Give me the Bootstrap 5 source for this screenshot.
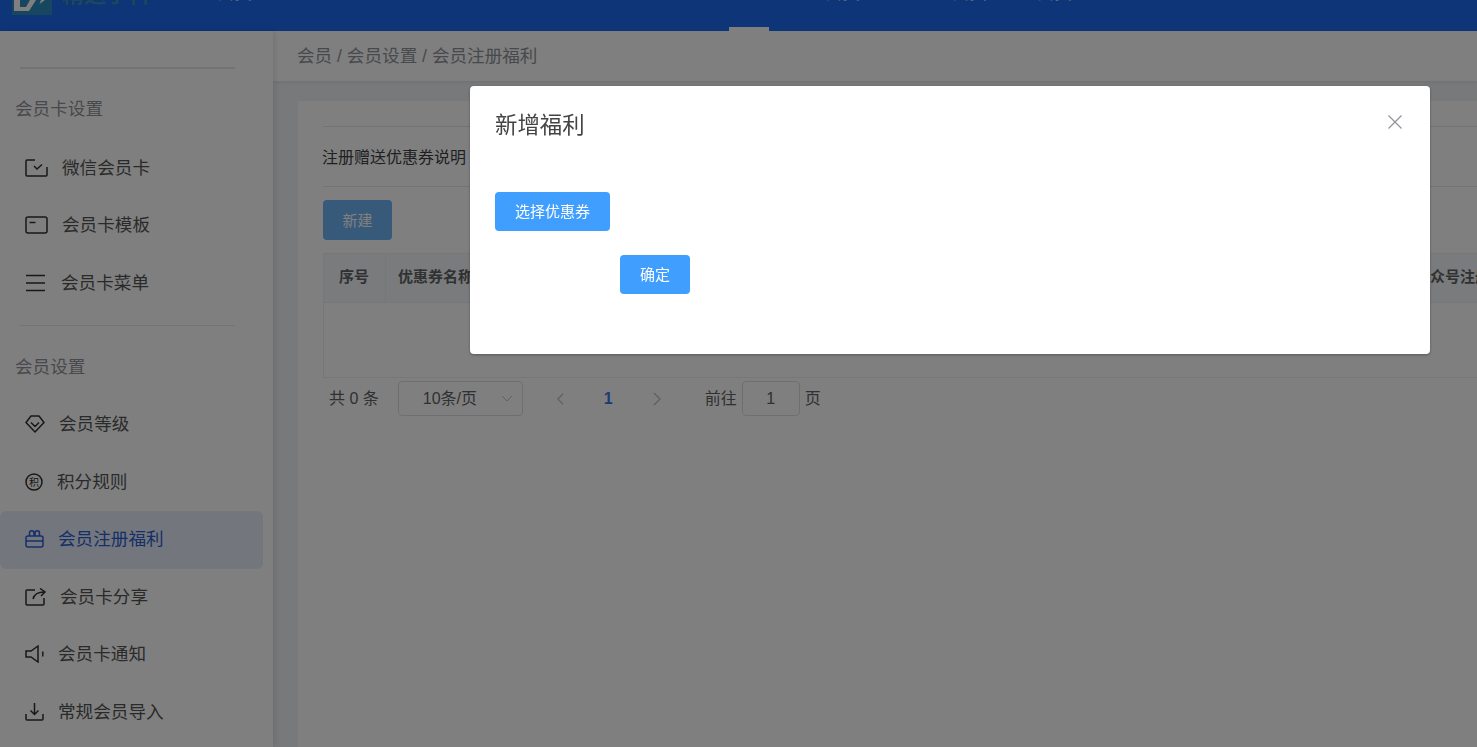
<!DOCTYPE html>
<html lang="zh-CN">
<head>
  <meta charset="UTF-8">
  <title>会员注册福利</title>
  <link href="https://cdn.jsdelivr.net/npm/bootstrap@5.3.0/dist/css/bootstrap.min.css" rel="stylesheet">
  <style>
    html, body {
      height: 100%;
    }
    body {
      overflow: hidden;
      background-color: #f0f2f5;
      color: #303133;
      font-family: "Liberation Sans", "Noto Sans CJK SC", sans-serif;
    }
    /* top bar, page is scrolled so it is cut off */
    .top-strip {
      height: 31px;
      background-color: #1a6af0;
      overflow: hidden;
      width: 1477px;
    }
    .strip-logo {
      width: 40px;
      height: 15px;
      margin-left: 12px;
      flex: none;
    }
    .strip-name {
      margin: -18px 0 0 10px;
      width: 90px;
      font-size: 22px;
      line-height: 26px;
      font-weight: 700;
      color: #3f8fb5;
      white-space: nowrap;
    }
    .strip-link {
      position: absolute;
      top: -16.5px;
      font-size: 18px;
      line-height: 18px;
      color: #fff;
    }
    .strip-active {
      position: absolute;
      left: 729px;
      top: 27px;
      width: 40px;
      height: 4px;
      background-color: #fff;
    }
    .page-area {
      height: calc(100% - 31px);
    }
    /* sidebar */
    .side-menu {
      width: 273px;
      flex: none;
      background-color: #fff;
      box-shadow: 2px 0 6px rgba(0, 0, 0, .1);
      padding-top: 36px;
      position: relative;
      z-index: 1;
    }
    .side-line {
      width: 215px;
      height: 2px;
      margin-left: 20px;
      background-color: #e4e7ed;
    }
    .side-line-b {
      height: 1px;
      margin-top: 12.5px;
    }
    .side-title {
      height: 70.5px;
      padding: 9px 0 0 15px;
      font-size: 17.6px;
      color: #909399;
    }
    .side-title-b {
      padding-top: 13px;
    }
    .side-item {
      height: 57.5px;
      width: 263px;
      padding: 0 0 1px 25px;
      gap: 14px;
      font-size: 17.6px;
      color: #555;
      border-radius: 6px;
    }
    .side-item svg {
      flex: none;
      fill: none;
      stroke: #303133;
      stroke-width: 1.5;
    }
    .side-item svg text {
      fill: #303133;
      stroke: none;
      font-size: 10px;
      text-anchor: middle;
    }
    .side-item.current {
      background-color: #e7edfb;
      color: #2a5fd0;
    }
    .side-item.current svg {
      stroke: #2a5fd0;
    }
    /* main */
    .main-area {
      min-width: 0;
    }
    .crumb-bar {
      height: 50px;
      padding-left: 24px;
      background-color: #fff;
      font-size: 17.6px;
      color: #909399;
      box-shadow: 0 1px 4px rgba(0, 0, 0, .08);
    }
    .main-panel {
      margin: 20px 0 0 25px;
      padding: 25px 0 0 25px;
      background-color: #fff;
      flex: 1;
      width: 1300px;
    }
    .tip-row {
      height: 61px;
      padding-top: 2px;
      border-top: 1px solid #e4e7ed;
      border-bottom: 1px solid #e4e7ed;
      font-size: 16px;
      color: #3f4145;
    }
    .tip-row span {
      margin-left: -1px;
    }
    .add-btn {
      margin-top: 13px;
      width: 69px;
      height: 40px;
      padding: 2px 0 0;
      font-size: 15px;
      color: #fff;
      background-color: #6fb3f5;
      border: 0;
      border-radius: 4px;
    }
    .coupon-table {
      margin-top: 13px;
      width: 1300px;
      height: 125px;
      border: 1px solid #ebeef5;
    }
    .coupon-head {
      height: 49px;
      background-color: #f5f7fa;
      border-bottom: 1px solid #ebeef5;
      font-size: 15px;
      font-weight: 700;
      color: #606266;
    }
    .coupon-head > div {
      padding-left: 12px;
      padding-bottom: 2px;
      white-space: nowrap;
    }
    .head-no {
      width: 62px;
      padding-left: 15px !important;
      border-right: 1px solid #ebeef5;
    }
    .head-name {
      width: 1017px;
    }
    .pager-row {
      height: 35px;
      margin-top: 3px;
      padding-left: 6px;
      font-size: 16px;
      color: #606266;
    }
    .pager-size {
      width: 125px;
      height: 35px;
      margin-left: 19px;
      padding-left: 24px;
      padding-right: 9px;
      border: 1px solid #dcdfe6;
      border-radius: 4px;
    }
    .pager-num {
      margin: 0 39px 0 28px;
      width: 9px;
      font-size: 16px;
      font-weight: 700;
      color: #3a7be0;
    }
    .pager-jump {
      width: 58px;
      height: 35px;
      margin: 0 5px 0 5px;
      border: 1px solid #dcdfe6;
      border-radius: 4px;
    }
    /* dialog */
    .benefit-dialog {
      max-width: 960px;
      width: 960px;
      margin: 86px 0 0 470px;
    }
    .benefit-dialog .modal-content {
      height: 268px;
      border: 0;
      border-radius: 4px;
      box-shadow: 0 1px 3px rgba(0, 0, 0, .3);
    }
    .benefit-title {
      padding: 24px 25px 0;
      font-size: 22.4px;
      line-height: 32px;
      font-weight: 400;
      color: #444;
    }
    .benefit-close {
      position: absolute;
      top: 29px;
      right: 28px;
      width: 14px;
      height: 14px;
      padding: 0;
      border: 0;
      background: none;
    }
    .benefit-body {
      padding: 50px 25px 0;
    }
    .blue-btn {
      display: block;
      height: 39px;
      padding: 2px 20px 0;
      font-size: 15px;
      color: #fff;
      background-color: #409eff;
      border: 0;
      border-radius: 4px;
    }
    .blue-btn.save-btn {
      margin: 24px 0 0 125px;
      width: 70px;
      padding: 2px 0 0;
    }
  </style>
</head>
<body>
  <div class="top-strip position-relative d-flex align-items-start">
    <svg class="strip-logo" viewBox="0 0 40 15">
      <rect width="40" height="15" fill="#2f8fc0"/>
      <path d="M2 0v11h15L24 0h-6l-4 7H8V0zM29 0l-1.500 4L33 0z" fill="#fff"/>
    </svg>
    <div class="strip-name">精选学科</div>
    <span class="strip-link" style="left:216px">会员</span>
    <span class="strip-link" style="left:824px">会员</span>
    <span class="strip-link" style="left:951px">会员</span>
    <span class="strip-link" style="left:1036px">会员</span>
    <div class="strip-active"></div>
  </div>

  <div class="page-area d-flex">
    <div class="side-menu">
      <div class="side-line"></div>
      <div class="side-title d-flex align-items-center">会员卡设置</div>
      <div class="side-item d-flex align-items-center">
        <svg width="23" height="18" viewBox="0 0 23 18"><path d="M10 1H2a1 1 0 0 0-1 1v14a1 1 0 0 0 1 1h19a1 1 0 0 0 1-1V8M9 7l3 3 5-4.500"/></svg>
        <span>微信会员卡</span>
      </div>
      <div class="side-item d-flex align-items-center">
        <svg width="23" height="18" viewBox="0 0 23 18"><rect x="1" y="1" width="21" height="16" rx="2"/><path d="M4.500 6.500h6"/></svg>
        <span>会员卡模板</span>
      </div>
      <div class="side-item d-flex align-items-center">
        <svg width="22" height="18" viewBox="0 0 22 18"><path d="M1 1.500h19M1 9h19M1 16.500h19"/></svg>
        <span>会员卡菜单</span>
      </div>
      <div class="side-line side-line-b"></div>
      <div class="side-title side-title-b d-flex align-items-center">会员设置</div>
      <div class="side-item d-flex align-items-center">
        <svg width="20" height="18" viewBox="0 0 20 18"><path d="M6 1h8l5 6.500L10 17 1 7.500zM6 7.500l4 4 4-4" stroke-linejoin="round"/></svg>
        <span>会员等级</span>
      </div>
      <div class="side-item d-flex align-items-center">
        <svg width="18" height="18" viewBox="0 0 18 18"><circle cx="9" cy="9" r="8"/><text x="9" y="12.500">积</text></svg>
        <span>积分规则</span>
      </div>
      <div class="side-item current d-flex align-items-center">
        <svg width="19" height="18" viewBox="0 0 19 18"><rect x="1" y="6" width="17" height="11" rx="2"/><path d="M1 11h17M4.500 6V3a2 2 0 0 1 4.500 0v3M10 6V3a2 2 0 0 1 4.500 0v3"/></svg>
        <span>会员注册福利</span>
      </div>
      <div class="side-item d-flex align-items-center">
        <svg width="21" height="18" viewBox="0 0 21 18"><path d="M10 2H2a1 1 0 0 0-1 1v13a1 1 0 0 0 1 1h16a1 1 0 0 0 1-1V10M8 11c1-4 5-7 11-7M15 .500 20 4l-4 4"/></svg>
        <span>会员卡分享</span>
      </div>
      <div class="side-item d-flex align-items-center">
        <svg width="19" height="18" viewBox="0 0 19 18"><path d="M13 1 6 6H1v6h5l7 5zM17.500 6.500c.500 1.500.500 3.500 0 5"/></svg>
        <span>会员卡通知</span>
      </div>
      <div class="side-item d-flex align-items-center">
        <svg width="19" height="18" viewBox="0 0 19 18"><path d="M9.500 0v11M5.500 7.500l4 4 4-4M1 11v5a1 1 0 0 0 1 1h15a1 1 0 0 0 1-1v-5"/></svg>
        <span>常规会员导入</span>
      </div>
    </div>

    <div class="main-area flex-grow-1 d-flex flex-column">
      <div class="crumb-bar d-flex align-items-center">会员 / 会员设置 / 会员注册福利</div>
      <div class="main-panel">
        <div class="tip-row d-flex align-items-center"><span>注册赠送优惠券说明</span></div>
        <button type="button" class="btn add-btn">新建</button>
        <div class="coupon-table">
          <div class="coupon-head d-flex align-items-center">
            <div class="head-no h-100 d-flex align-items-center">序号</div>
            <div class="head-name">优惠券名称</div>
            <div>公众号注册</div>
          </div>
        </div>
        <div class="pager-row d-flex align-items-center">
          <span>共 0 条</span>
          <div class="pager-size d-flex align-items-center justify-content-between">
            <span>10条/页</span>
            <svg width="12" height="7" viewBox="0 0 12 7" fill="none" stroke="#c0c4cc"><path d="m1 1 5 5 5-5"/></svg>
          </div>
          <svg class="ms-4 ps-1" width="29" height="14" viewBox="0 0 29 14" fill="none" stroke="#c0c4cc" stroke-width="1.500"><path d="m14 1-6 6 6 6"/></svg>
          <span class="pager-num">1</span>
          <svg width="29" height="14" viewBox="0 0 29 14" fill="none" stroke="#c0c4cc" stroke-width="1.500"><path d="m2 1 6 6-6 6"/></svg>
          <span class="ms-4">前往</span>
          <div class="pager-jump d-flex align-items-center justify-content-center">1</div>
          <span>页</span>
        </div>
      </div>
    </div>
  </div>

  <div class="modal-backdrop show"></div>
  <div class="modal d-block">
    <div class="modal-dialog benefit-dialog">
      <div class="modal-content">
        <div class="benefit-title">新增福利</div>
        <button type="button" class="benefit-close" aria-label="关闭">
          <svg class="d-block" width="14" height="14" viewBox="0 0 14 14" fill="none" stroke="#909399" stroke-width="1.200"><path d="m.5.5 13 13M13.500.5l-13 13"/></svg>
        </button>
        <div class="benefit-body">
          <button type="button" class="btn blue-btn">选择优惠券</button>
          <button type="button" class="btn blue-btn save-btn">确定</button>
        </div>
      </div>
    </div>
  </div>

  <script src="https://cdn.jsdelivr.net/npm/bootstrap@5.3.0/dist/js/bootstrap.bundle.min.js"></script>
</body>
</html>
